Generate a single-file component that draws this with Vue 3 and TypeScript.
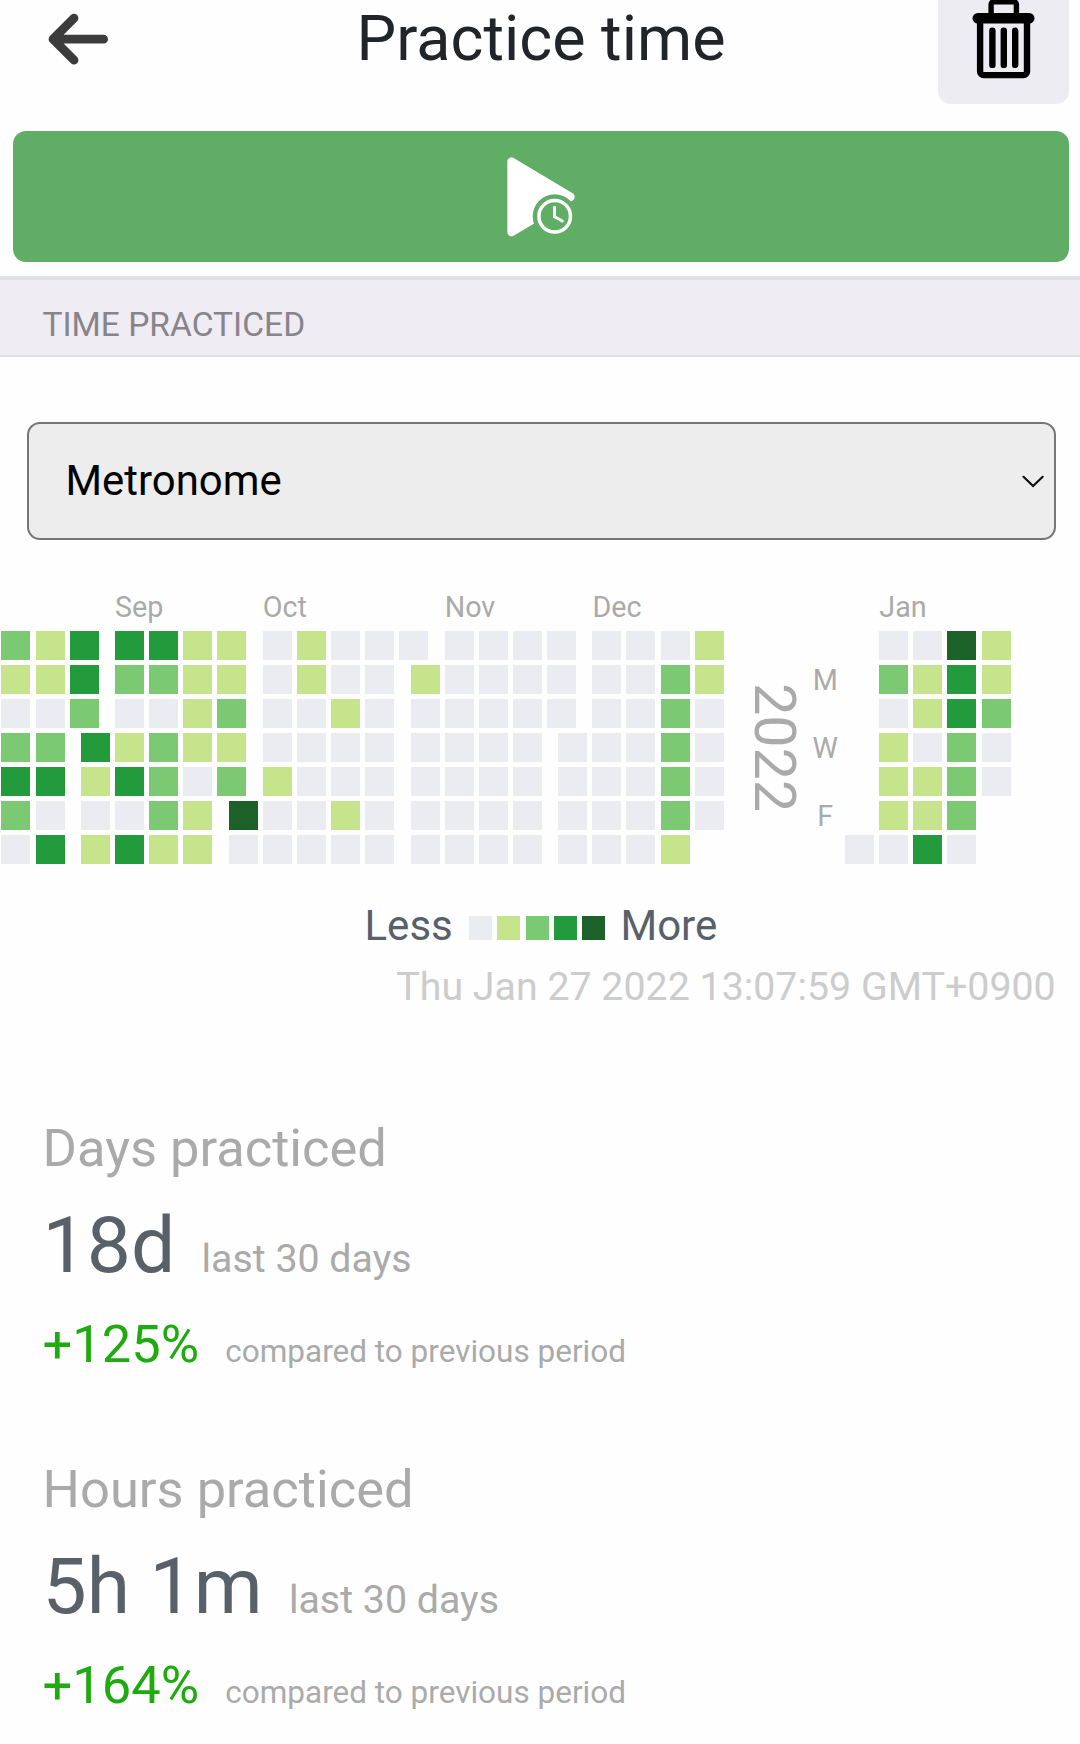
<script setup lang="ts">
interface MonthLabel {
  name: string
  width: number
}

interface YearBlock {
  months: MonthLabel[]
  rows: string[]
}

interface Stat {
  title: string
  value: string
  change: string
}

const WEEK = 34.1
const MONTH_GAP = 11.35

const span = (weeks: number, gaps = 1): number => weeks * WEEK + gaps * MONTH_GAP

// One string per weekday, Sunday first. Digits are activity levels,
// "|" starts a new month and "." is an empty slot.
const lastYear: YearBlock = {
  months: [
    { name: '', width: span(3) },
    { name: 'Sep', width: span(4) },
    { name: 'Oct', width: span(5) },
    { name: 'Nov', width: span(4) },
    { name: 'Dec', width: span(4, 0) },
  ],
  rows: [
    '213|3311|01000|0000|0001',
    '113|2211|0100|10000|0021',
    '002|0012|0010|00000|0020',
    '22|31211|0000|0000|00020',
    '33|13202|1000|0000|00020',
    '20|0021|40010|0000|00020',
    '03|1311|00000|0000|0001',
  ],
}

const thisYear: YearBlock = {
  months: [
    { name: '', width: span(1, 0) },
    { name: 'Jan', width: span(4, 0) },
  ],
  rows: ['.0041', '.2131', '.0132', '.1020', '.1120', '.112', '0030'],
}

const weekdays = ['', 'M', '', 'W', '', 'F', '']
const levels = [0, 1, 2, 3, 4]

const cellClass = (code: string): string => {
  if (code === '|') return 'month-gap'
  return code === '.' ? 'cell' : `cell level-${code}`
}

const stats: Stat[] = [
  { title: 'Days practiced', value: '18d', change: '+125%' },
  { title: 'Hours practiced', value: '5h 1m', change: '+164%' },
]
</script>

<template>
  <div class="page">
    <header class="top-bar">
      <button class="back" aria-label="Back">
        <svg width="64" height="56" viewBox="0 0 64 56" fill="none">
          <path d="M28 7.2 7 28.2 28 49.2M8 28.2H57.6" stroke="#3c3c3c" stroke-width="8.8" stroke-linecap="round" stroke-linejoin="round" />
        </svg>
      </button>
      <h1>Practice time</h1>
      <button class="trash" aria-label="Delete">
        <svg width="64" height="82" viewBox="0 0 64 82" fill="none" stroke="#000">
          <path d="M19.1 18V6.5a2.8 2.8 0 0 1 2.8-2.8H41.6a2.8 2.8 0 0 1 2.8 2.8V18" stroke-width="5.4" />
          <path d="M5.8 20.3H57.2" stroke-width="10.6" stroke-linecap="round" />
          <path d="M8.1 22V73.5a3.6 3.6 0 0 0 3.6 3.6H51.4a3.6 3.6 0 0 0 3.6-3.6V22" stroke-width="6.4" />
          <path d="M20.4 32.8V66.9M31.8 32.8V66.9M43.2 32.8V66.9" stroke-width="6.4" stroke-linecap="round" />
        </svg>
      </button>
    </header>

    <button class="start" aria-label="Start practice">
      <svg width="72" height="84" viewBox="0 0 72 84">
        <defs>
          <mask id="clock-cut">
            <rect width="72" height="84" fill="#fff" />
            <circle cx="49.7" cy="61.3" r="22" fill="#000" />
          </mask>
        </defs>
        <path d="M6.5 6.5V77.2L65.5 41.9Z" fill="#fff" stroke="#fff" stroke-width="8.3" stroke-linejoin="round" mask="url(#clock-cut)" />
        <circle cx="49.7" cy="61.3" r="15.8" fill="none" stroke="#fff" stroke-width="3.5" />
        <path d="M49.5 52.2V61.7L57.3 66" fill="none" stroke="#fff" stroke-width="3" stroke-linecap="round" stroke-linejoin="round" />
      </svg>
    </button>

    <h2 class="section-title">TIME PRACTICED</h2>

    <div class="picker" role="combobox">
      <span>Metronome</span>
      <svg width="26" height="16" viewBox="0 0 26 16" fill="none">
        <path d="M3.5 3.8 13.1 13 22.7 3.8" stroke="#111" stroke-width="2.2" stroke-linecap="round" />
      </svg>
    </div>

    <section class="heatmap">
      <div class="year-block">
        <div class="months">
          <span v-for="m in lastYear.months" :key="m.name" :style="{ width: m.width + 'px' }">{{ m.name }}</span>
        </div>
        <div v-for="(row, r) in lastYear.rows" :key="r" class="week-row">
          <i v-for="(code, c) in row.split('')" :key="c" :class="cellClass(code)"></i>
        </div>
      </div>
      <div class="year">2022</div>
      <div class="weekdays">
        <span v-for="(day, d) in weekdays" :key="d">{{ day }}</span>
      </div>
      <div class="year-block">
        <div class="months">
          <span v-for="m in thisYear.months" :key="m.name" :style="{ width: m.width + 'px' }">{{ m.name }}</span>
        </div>
        <div v-for="(row, r) in thisYear.rows" :key="r" class="week-row">
          <i v-for="(code, c) in row.split('')" :key="c" :class="cellClass(code)"></i>
        </div>
      </div>
    </section>

    <div class="legend">
      <span>Less</span>
      <div class="swatches">
        <i v-for="n in levels" :key="n" :class="`level-${n}`"></i>
      </div>
      <span>More</span>
    </div>
    <p class="timestamp">Thu Jan 27 2022 13:07:59 GMT+0900</p>

    <section class="stats">
      <article v-for="s in stats" :key="s.title">
        <h3>{{ s.title }}</h3>
        <p class="value"><b>{{ s.value }}</b><span>last 30 days</span></p>
        <p class="change"><b>{{ s.change }}</b><span>compared to previous period</span></p>
      </article>
    </section>
  </div>
</template>

<style>
body {
  margin: 0;
  background: #fefefe;
}
</style>

<style scoped>
.page {
  width: 1080px;
  height: 1744px;
  overflow: hidden;
  background: #fefefe;
  font-family: Roboto, "Liberation Sans", sans-serif;
  font-size: 42px;
  color: #212529;
}

h1,
h2,
h3,
p,
b {
  margin: 0;
  font-weight: 400;
}

button {
  padding: 0;
  border: 0;
  background: none;
}

svg {
  display: block;
}

.top-bar {
  display: grid;
  grid-template-columns: 131px 1fr 131px;
  align-items: center;
  height: 77px;
  padding: 0 11px 0 13px;
}

.back {
  padding-left: 33px;
}

h1 {
  font-size: 62.9px;
  line-height: 76px;
  text-align: center;
}

.trash {
  display: flex;
  align-items: flex-end;
  justify-content: center;
  height: 131px;
  margin: -27px 0;
  padding-bottom: 24px;
  box-sizing: border-box;
  border-radius: 13px;
  background: #edecf3;
}

.start {
  display: flex;
  align-items: center;
  width: 1056px;
  height: 131px;
  margin: 54px 0 0 13px;
  padding-left: 492px;
  box-sizing: border-box;
  border-radius: 13px;
  background: #60ad66;
}

.section-title {
  height: 81px;
  margin-top: 14px;
  padding: 14px 0 0 42.4px;
  box-sizing: border-box;
  border-top: 4px solid #dee2e7;
  border-bottom: 2px solid #dfdee5;
  background: #efecf4;
  color: #87848b;
  font-size: 33.55px;
  line-height: 62px;
}

.picker {
  display: flex;
  align-items: center;
  justify-content: space-between;
  width: 1029px;
  height: 118px;
  margin: 65px 0 0 27px;
  padding: 0 8px 0 36.5px;
  box-sizing: border-box;
  border: 2px solid #767676;
  border-radius: 13px;
  background: #ededed;
  color: #000;
  font-size: 41.9px;
}

.picker span {
  margin-top: -1px;
}

.heatmap {
  display: flex;
  margin-top: 51.3px;
  padding-left: 1.45px;
  color: #aaa;
  font-size: 28.7px;
}

.year-block {
  flex: none;
}

.months {
  display: flex;
  height: 39.4px;
  line-height: 32px;
}

.months span {
  flex: none;
}

.week-row {
  display: flex;
  height: 34.1px;
}

.cell {
  flex: none;
  width: 29px;
  height: 29px;
  margin-right: 5.1px;
}

.month-gap {
  flex: none;
  width: 11.35px;
}

.year {
  width: 60px;
  height: 233.6px;
  margin: 39.4px 0 0 14.8px;
  writing-mode: vertical-rl;
  font-size: 57.4px;
  line-height: 60px;
  text-align: center;
}

.weekdays {
  display: flex;
  flex-direction: column;
  width: 30px;
  margin: 39.4px 5px 0 6.6px;
  text-align: center;
  line-height: 30.4px;
}

.weekdays span {
  height: 34.1px;
}

.level-0 {
  background: #ebecf1;
}

.level-1 {
  background: #c6e48b;
}

.level-2 {
  background: #7cc973;
}

.level-3 {
  background: #239a3b;
}

.level-4 {
  background: #1b6128;
}

.legend {
  display: flex;
  align-items: center;
  height: 50px;
  margin: 31.3px 0 0 364.5px;
  color: #586069;
  line-height: 50px;
}

.swatches {
  display: flex;
  gap: 5.2px;
  margin: 4.6px 15.6px 0 16.4px;
}

.swatches i {
  width: 23px;
  height: 24px;
}

.timestamp {
  margin: 13.4px 24.3px 0 0;
  color: #ccc;
  font-size: 39.35px;
  line-height: 46px;
  text-align: right;
}

.stats {
  display: flex;
  flex-direction: column;
  gap: 82px;
  margin: 107.1px 0 0 42.6px;
  color: #aaa;
}

h3 {
  font-size: 52.45px;
  line-height: 62px;
}

.value,
.change {
  display: flex;
  align-items: baseline;
  gap: 26.25px;
}

.value {
  height: 92px;
  margin-top: 20px;
  font-size: 39.35px;
}

.value b {
  color: #586069;
  font-size: 78.6px;
  line-height: 92px;
}

.change {
  height: 62px;
  margin-top: 22px;
  padding-bottom: 1px;
  font-size: 31.5px;
}

.change b {
  color: #1fab0f;
  font-size: 52.4px;
  line-height: 62px;
}
</style>
